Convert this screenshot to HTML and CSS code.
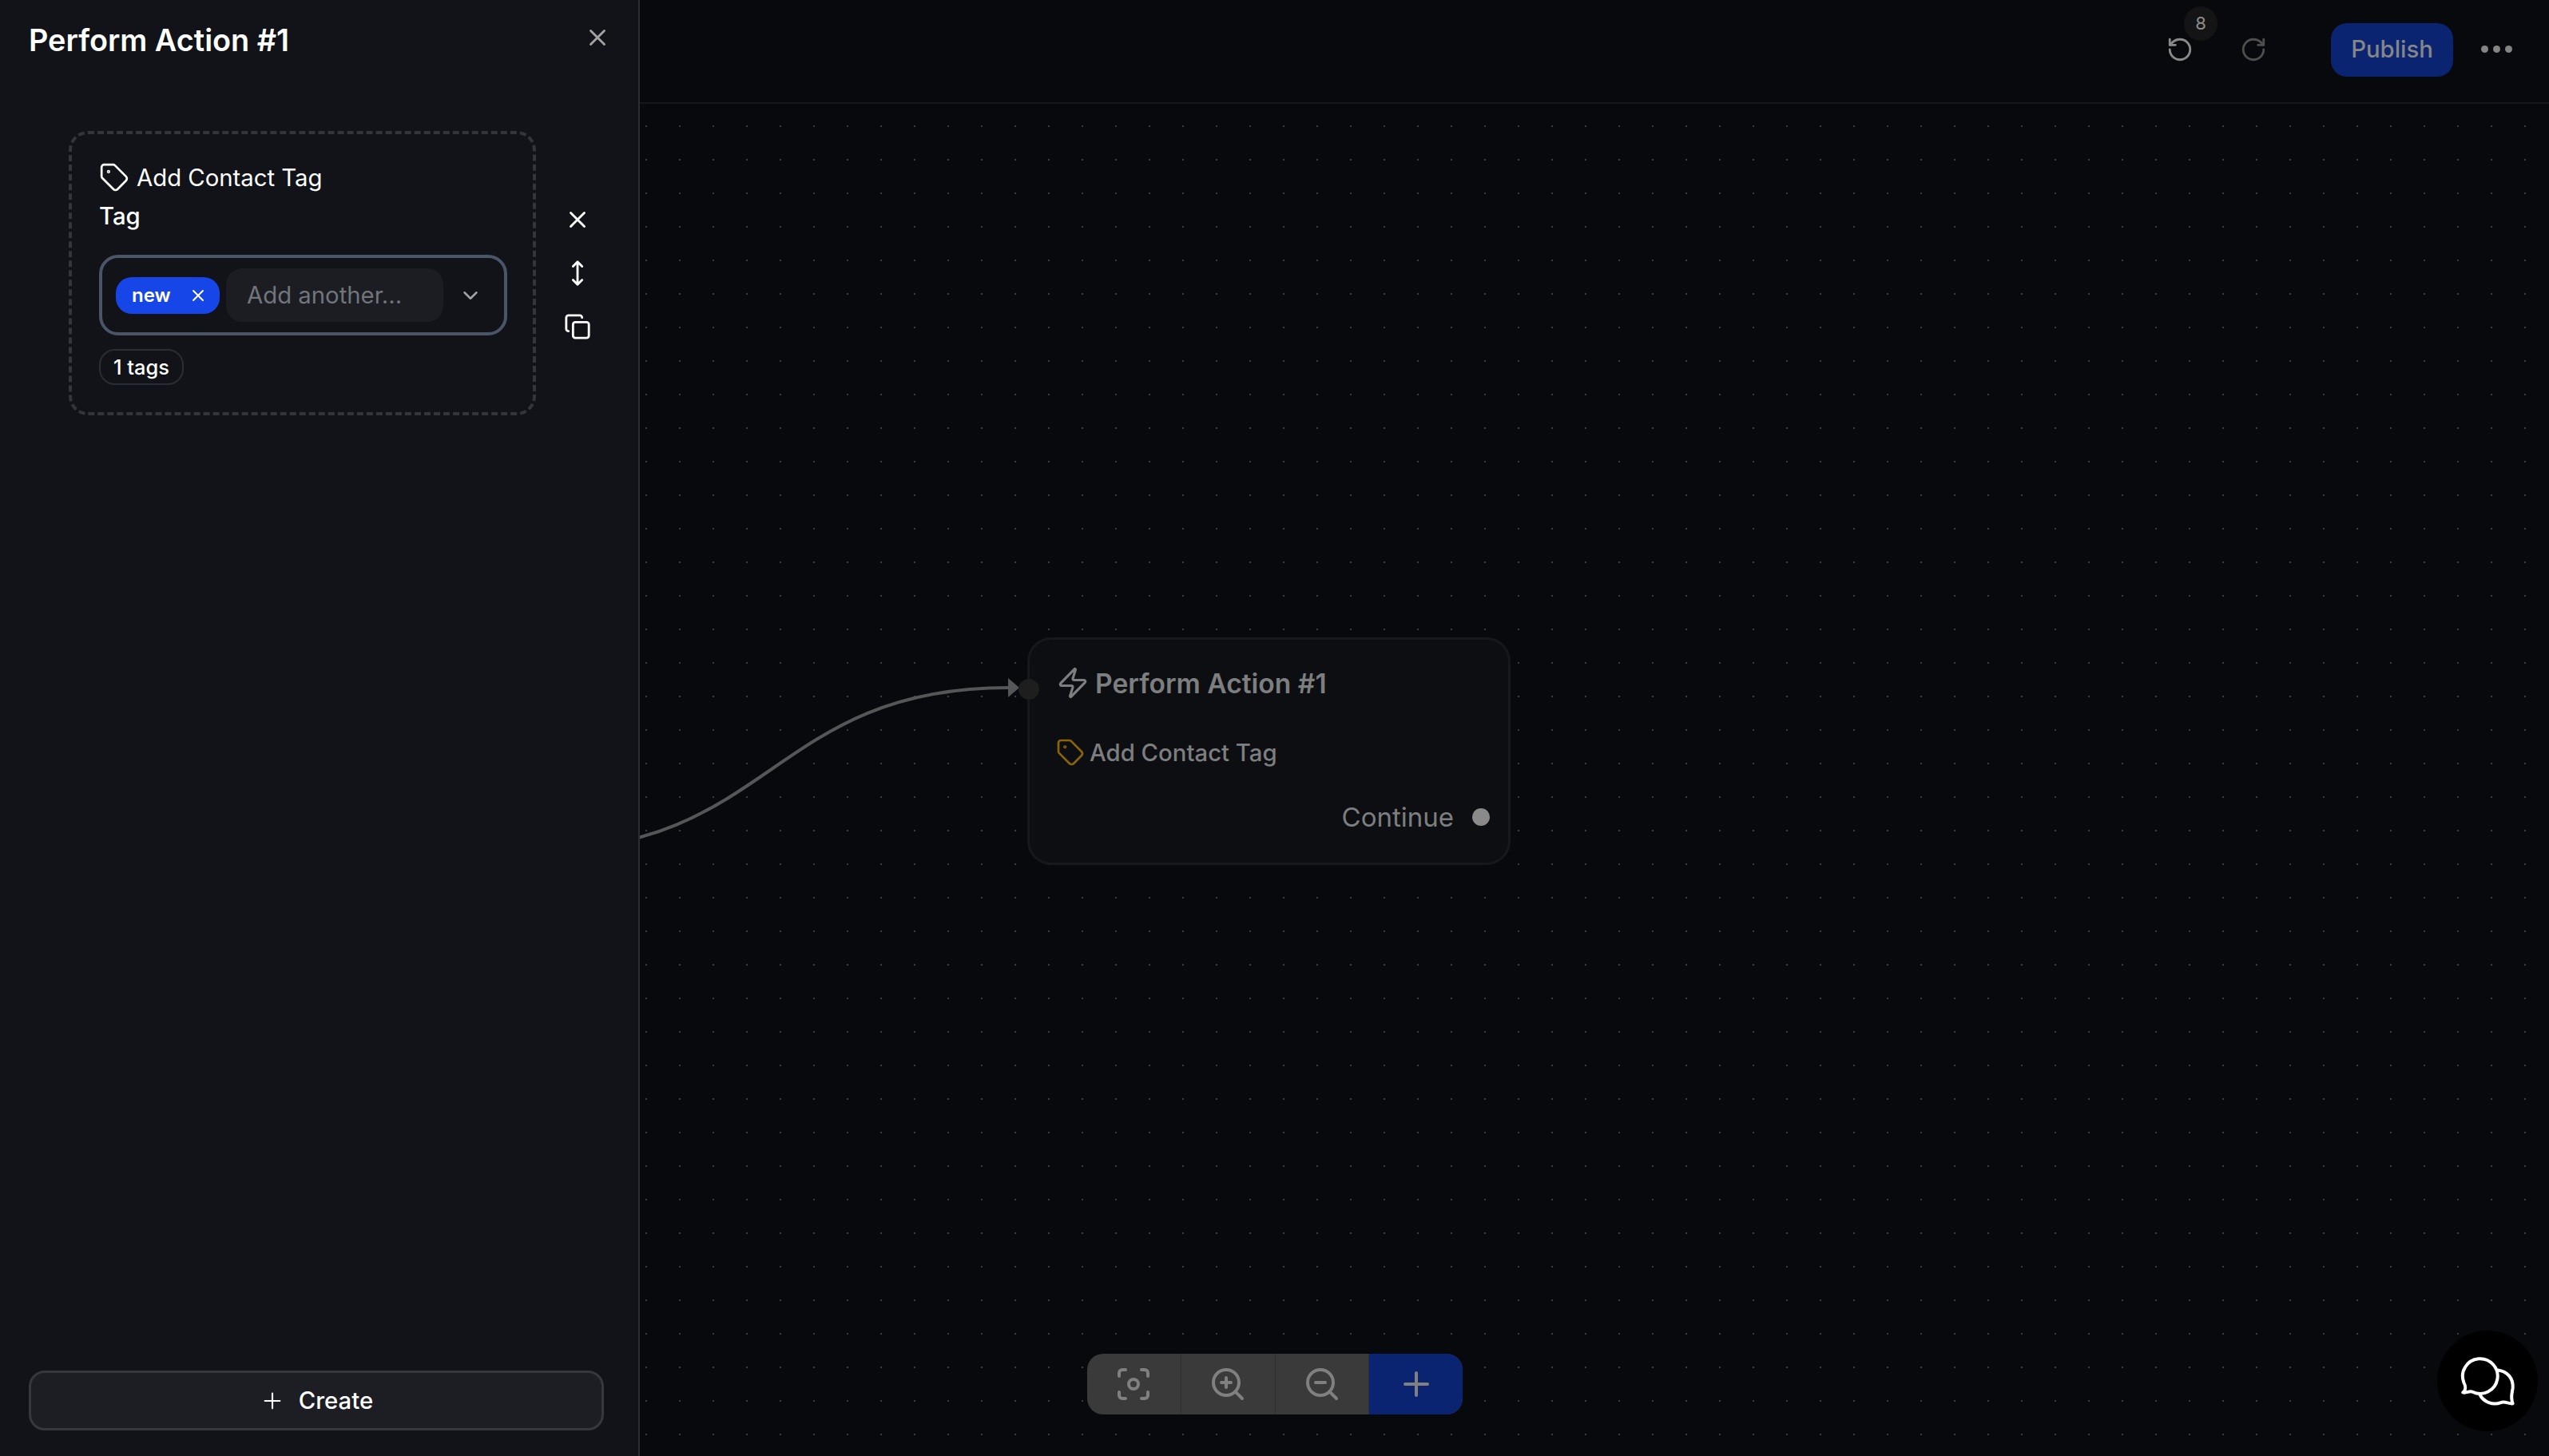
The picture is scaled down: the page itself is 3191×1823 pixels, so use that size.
FILE: index.html
```html
<!DOCTYPE html>
<html lang="en">
<head>
<meta charset="utf-8">
<title>Perform Action #1</title>
<link rel="stylesheet" href="styles.css">
</head>
<body>
<div class="app">
  <aside class="panel">
    <div class="panel-head">
      <h1 class="panel-title">Perform Action #1</h1>
      <svg class="ic close-ic" viewBox="0 0 24 24"><path d="M18 6 6 18M6 6l12 12"/></svg>
    </div>
    <div class="panel-body">
      <div class="card">
        <div class="card-title">
          <svg class="ic tag-ic" viewBox="0 0 24 24"><path d="M12.586 2.586A2 2 0 0 0 11.172 2H4a2 2 0 0 0-2 2v7.172a2 2 0 0 0 .586 1.414l8.704 8.704a2.426 2.426 0 0 0 3.42 0l6.58-6.58a2.426 2.426 0 0 0 0-3.42z"/><circle cx="7.5" cy="7.5" r=".5"/></svg>
          <span>Add Contact Tag</span>
        </div>
        <div class="field-label">Tag</div>
        <div class="tag-input">
          <span class="chip">new<svg class="ic chip-x" viewBox="0 0 24 24"><path d="M18 6 6 18M6 6l12 12"/></svg></span>
          <span class="another">Add another...</span>
          <svg class="ic chevron" viewBox="0 0 24 24"><path d="m6 9 6 6 6-6"/></svg>
        </div>
        <span class="count">1 tags</span>
      </div>
      <div class="side-tools">
        <svg class="ic side-ic" viewBox="0 0 24 24"><path d="M18 6 6 18M6 6l12 12"/></svg>
        <svg class="ic side-ic" viewBox="0 0 24 24"><path d="M12 2v20M8 18l4 4 4-4M8 6l4-4 4 4"/></svg>
        <svg class="ic side-ic" viewBox="0 0 24 24"><rect x="8" y="8" width="14" height="14" rx="2"/><path d="M4 16c-1.1 0-2-.9-2-2V4c0-1.1.9-2 2-2h10c1.1 0 2 .9 2 2"/></svg>
      </div>
    </div>
    <div class="panel-foot">
      <button class="create"><svg class="ic plus-ic" viewBox="0 0 24 24"><path d="M5 12h14M12 5v14"/></svg>Create</button>
    </div>
  </aside>
  <main class="main">
    <header class="topbar">
      <div class="history">
        <span class="undo">
          <svg class="ic hist-ic" viewBox="0 0 24 24"><path d="M3 12a9 9 0 1 0 9-9 9.75 9.75 0 0 0-6.74 2.74L3 8"/><path d="M3 3v5h5"/></svg>
          <span class="badge">8</span>
        </span>
        <svg class="ic hist-ic redo" viewBox="0 0 24 24"><path d="M21 12a9 9 0 1 1-9-9c2.52 0 4.93 1 6.74 2.74L21 8"/><path d="M21 3v5h-5"/></svg>
      </div>
      <button class="publish">Publish</button>
      <span class="more"><i></i><i></i><i></i></span>
    </header>
    <section class="canvas">
      <svg class="edge" viewBox="0 0 2391 1693" width="2391" height="1693">
        <path class="edge-line" d="M-131 935C165 935 165 731 461 731"/>
        <path class="edge-head" d="M461 719 475 731 461 743z"/>
      </svg>
      <div class="node">
        <span class="handle-in"></span>
        <div class="node-title">
          <svg class="ic zap" viewBox="0 0 24 24"><path d="M4 14a1 1 0 0 1-.78-1.63l9.9-10.2a.5.5 0 0 1 .86.46l-1.92 6.02A1 1 0 0 0 13 10h7a1 1 0 0 1 .78 1.63l-9.9 10.2a.5.5 0 0 1-.86-.46l1.92-6.02A1 1 0 0 0 11 14z"/></svg>
          <span>Perform Action #1</span>
        </div>
        <div class="node-action">
          <svg class="ic node-tag" viewBox="0 0 24 24"><path d="M12.586 2.586A2 2 0 0 0 11.172 2H4a2 2 0 0 0-2 2v7.172a2 2 0 0 0 .586 1.414l8.704 8.704a2.426 2.426 0 0 0 3.42 0l6.58-6.58a2.426 2.426 0 0 0 0-3.42z"/><circle cx="7.5" cy="7.5" r=".5"/></svg>
          <span>Add Contact Tag</span>
        </div>
        <div class="node-out">Continue<span class="handle-out"></span></div>
      </div>
      <div class="toolbar">
        <span class="tool"><svg class="ic tool-ic" viewBox="0 0 24 24"><circle cx="12" cy="12" r="3"/><path d="M3 7V5a2 2 0 0 1 2-2h2M17 3h2a2 2 0 0 1 2 2v2M21 17v2a2 2 0 0 1-2 2h-2M7 21H5a2 2 0 0 1-2-2v-2"/></svg></span>
        <span class="tool"><svg class="ic tool-ic" viewBox="0 0 24 24"><circle cx="11" cy="11" r="8"/><path d="m21 21-4.3-4.3M11 8v6M8 11h6"/></svg></span>
        <span class="tool"><svg class="ic tool-ic" viewBox="0 0 24 24"><circle cx="11" cy="11" r="8"/><path d="m21 21-4.3-4.3M8 11h6"/></svg></span>
        <span class="tool tool-add"><svg class="ic tool-ic" viewBox="0 0 24 24"><path d="M5 12h14M12 5v14"/></svg></span>
      </div>
      <div class="chat">
        <svg class="chat-ic" viewBox="260 168 212 196"><path d="M308 306C296 300 285 312 272 308 283 300 283 285 275 270A66 66 0 1 1 308 306Z"/><path d="M403 224C440 228 462 255 460 290 458 310 450 325 460 350 445 352 430 340 415 346 385 358 350 345 335 315"/></svg>
      </div>
    </section>
  </main>
</div>
</body>
</html>
```
FILE: styles.css
```css
* { box-sizing: border-box; }
html, body { margin: 0; height: 100%; overflow: hidden; background: #07090d; }
body { font-family: Inter, "Liberation Sans", sans-serif; color: #fff; }
.app { display: flex; height: 100vh; }
.ic { fill: none; stroke: currentColor; stroke-width: 2; stroke-linecap: round; stroke-linejoin: round; display: block; flex: none; }

.panel { width: 801px; flex: none; display: flex; flex-direction: column; background: #111318; border-right: 2px solid #2a2c31; }
.panel-head { display: flex; justify-content: space-between; align-items: center; height: 100px; padding: 0 34px 0 36px; }
.panel-title { margin: 0; font-size: 37.8px; line-height: 50px; font-weight: 600; }
.close-ic { width: 34px; height: 34px; color: #a3a3a3; margin-top: -6px; }
.panel-body { flex: 1; display: flex; align-items: flex-start; padding: 64px 0 0 86px; }
.card { width: 585px; height: 356px; flex: none; border: 4px dashed #33353b; border-radius: 24px; padding: 34px 0 0 34px; }
.card-title { display: flex; align-items: center; gap: 9px; height: 44px; font-size: 29.3px; margin-top: -2px; }
.tag-ic { width: 38px; height: 38px; stroke-width: 1.7; }
.field-label { font-size: 29.3px; font-weight: 500; line-height: 40px; margin-top: 7px; height: 68px; }
.tag-input { display: flex; align-items: center; width: 511px; height: 101px; border: 4px solid #4a5568; border-radius: 24px; padding: 0 0 0 17px; }
.chip { display: flex; align-items: center; justify-content: space-between; width: 130px; height: 46px; padding: 0 15px 0 20px; border-radius: 20px; background: #1746e8; font-size: 24px; font-weight: 600; }
.chip-x { width: 24px; height: 24px; }
.another { display: flex; align-items: center; width: 272px; height: 67px; margin-left: 8px; padding-left: 26px; background: #1b1d22; border-radius: 20px; font-size: 29.3px; color: #71757c; }
.chevron { width: 30px; height: 30px; margin-left: 19px; color: #a0a2a6; }
.count { display: inline-flex; align-items: center; height: 45px; margin-top: 17px; padding: 0 16px; border: 2px solid #2a2d33; border-radius: 20px; font-size: 25.4px; font-weight: 500; }

.side-tools { display: flex; flex-direction: column; gap: 33px; margin: 94px 0 0 35px; }
.side-ic { width: 34px; height: 34px; }

.panel-foot { padding: 0 43px 32px 36px; }
.create { display: flex; align-items: center; justify-content: center; gap: 17px; width: 720px; height: 75px; background: #1c1e23; border: 3px solid #36383e; border-radius: 20px; font: 500 29.3px Inter, sans-serif; color: #fff; padding: 0; }
.plus-ic { width: 32px; height: 32px; stroke-width: 1.6; }

.main { flex: 1; min-width: 0; display: flex; flex-direction: column; }
.topbar { height: 130px; flex: none; display: flex; align-items: flex-start; padding: 29px 0 0 0; border-bottom: 2px solid #15171b; background: #07090d; }
.history { display: flex; align-items: center; gap: 58px; margin-left: 1911px; height: 65px; }
.undo { position: relative; display: block; }
.hist-ic { width: 34px; height: 34px; color: #8a8a8a; }
.redo { color: #4e4e4e; }
.badge { position: absolute; left: 22px; top: -37px; width: 42px; height: 43px; border-radius: 50%; background: #141414; color: #8c8c8c; font-size: 22px; display: flex; align-items: center; justify-content: center; }
.publish { width: 153px; height: 67px; margin-left: 80px; border: 0; padding: 0 0 3px; border-radius: 20px; background: #0b2472; color: #858688; font: 500 29.3px Inter, sans-serif; }
.more { display: flex; gap: 6px; height: 65px; align-items: center; margin-left: 35px; }
.more i { width: 9px; height: 9px; border-radius: 50%; background: #858585; }

.canvas { position: relative; flex: 1; overflow: hidden; background-color: #07090d; background-image: radial-gradient(circle, #3c3e42 1px, transparent 1.5px); background-size: 42px 42px; background-position: -13px 7px; }
.edge { position: absolute; left: 0; top: 0; display: block; }
.edge-line { fill: none; stroke: #555658; stroke-width: 4; }
.edge-head { fill: #555658; }

.node { position: absolute; left: 485px; top: 668px; width: 605px; height: 285px; background: #0d0e11; border: 3px solid #17181b; border-radius: 30px; color: #7d7e80; }
.handle-in { position: absolute; left: -14px; top: 49px; width: 26px; height: 26px; border-radius: 50%; background: #1e1e1f; }
.node-title { display: flex; align-items: center; gap: 7px; margin: 30px 0 0 33px; height: 48px; font-size: 33.6px; font-weight: 600; }
.zap { width: 42px; height: 42px; stroke-width: 1.8; }
.node-action { display: flex; align-items: center; gap: 6px; margin: 42px 0 0 33px; height: 42px; font-size: 29.3px; font-weight: 500; }
.node-tag { width: 36px; height: 36px; color: #8a6408; stroke-width: 1.8; }
.node-out { display: flex; align-items: center; justify-content: flex-end; height: 48px; margin-top: 36px; padding-right: 23px; font-size: 33px; }
.handle-out { width: 22px; height: 22px; margin-left: 23px; border-radius: 50%; background: #8a8a8a; }

.toolbar { position: absolute; left: 560px; top: 1565px; width: 470px; height: 76px; display: flex; border-radius: 20px; overflow: hidden; background: #3a3a3a; color: #808080; }
.tool { flex: 1; display: flex; align-items: center; justify-content: center; border-right: 1px solid #2f2f2f; }
.tool-add { background: #0b2472; border-right: 0; }
.tool-ic { width: 48px; height: 48px; }
.chat { position: absolute; left: 2250px; top: 1536px; width: 126px; height: 126px; border-radius: 50%; background: #000; display: flex; align-items: center; justify-content: center; }
.chat-ic { width: 71px; height: 65px; fill: none; stroke: #fff; stroke-width: 12; stroke-linecap: round; stroke-linejoin: round; }
```
